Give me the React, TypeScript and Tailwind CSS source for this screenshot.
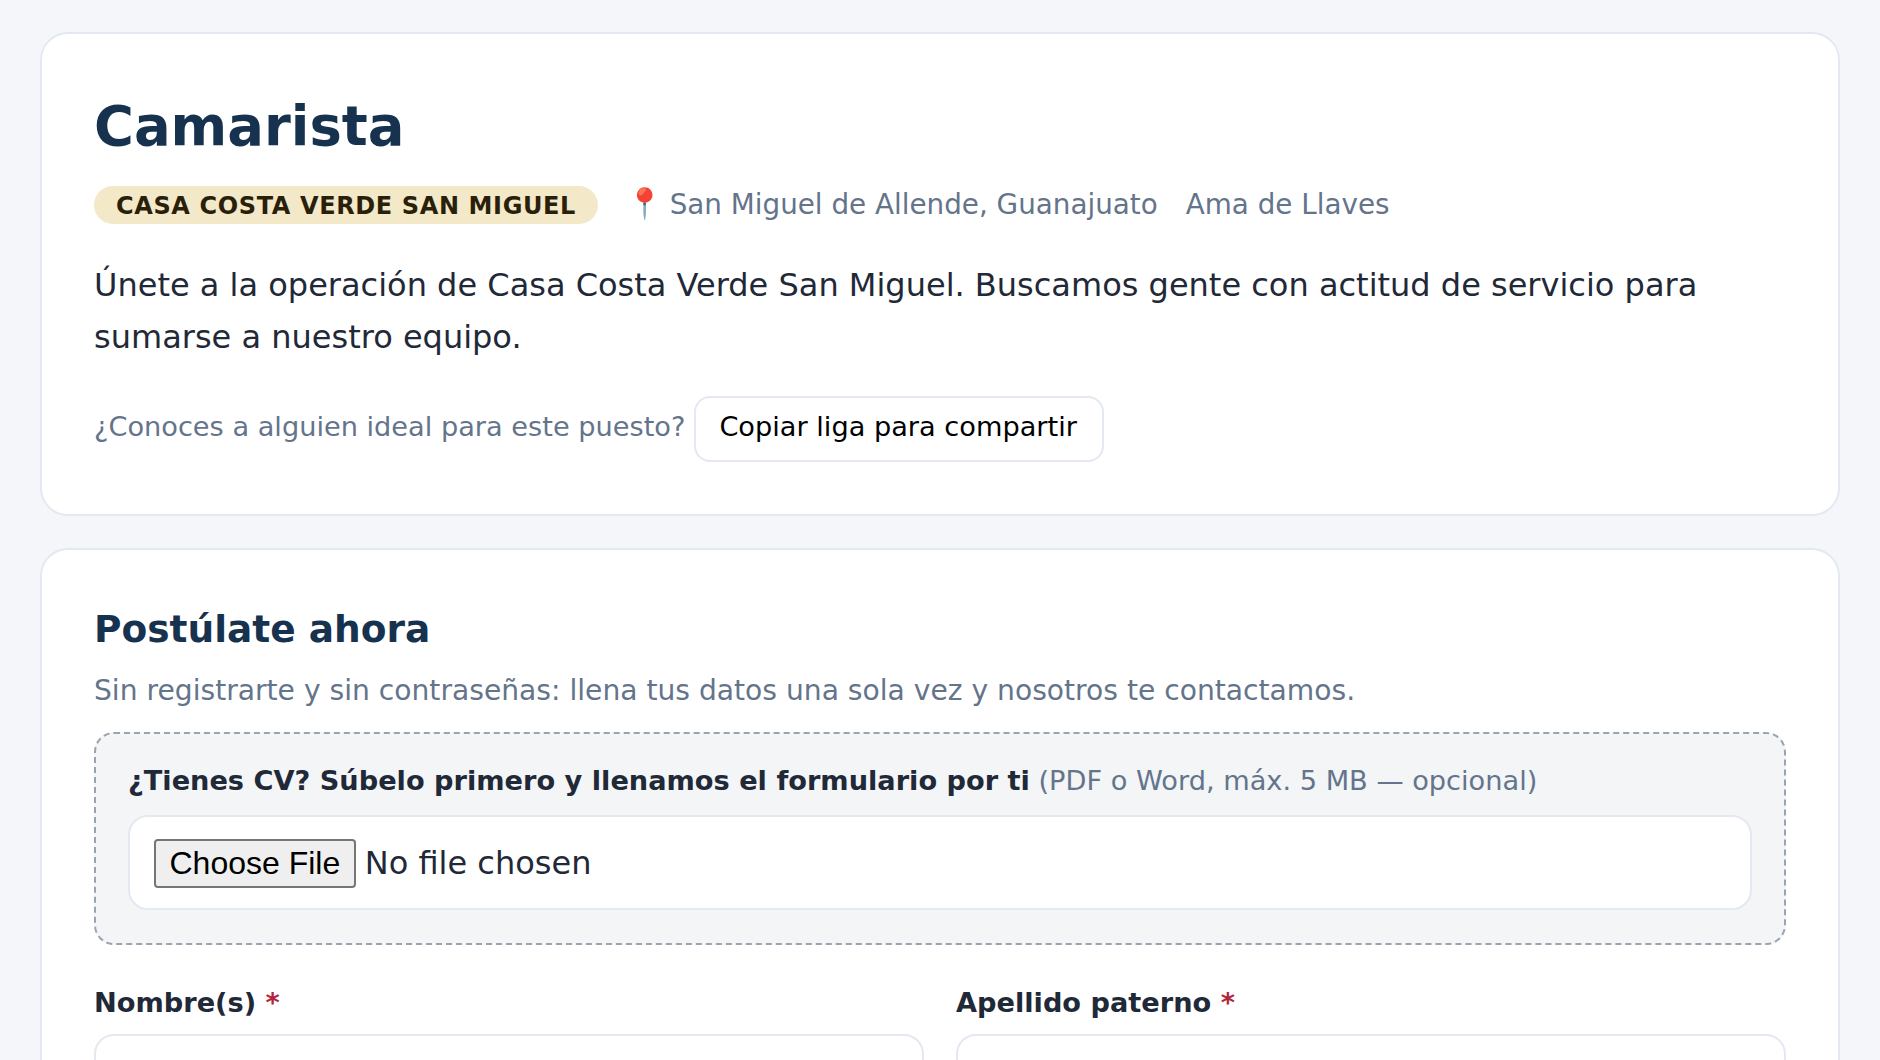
const FONT = "font-['DejaVu_Sans',sans-serif]";

function Field({ label }: { label: string }) {
  return (
    <div className="min-w-0">
      <label className="block text-[27.2px] leading-[34px] font-bold text-[#1f2937]">
        {label} <span className="text-[#b3243c]">*</span>
      </label>
      <input
        type="text"
        className="mt-[14px] block w-full h-[94px] bg-white border-2 border-[#e4e8f0] rounded-[20px]"
      />
    </div>
  );
}

export default function App() {
  return (
    <div className={`h-[1060px] overflow-hidden bg-[#f4f6fa] px-[40px] pt-[32px] ${FONT}`}>
      <section className="bg-white border-2 border-[#e4e8f0] rounded-[28px] px-[52px] pt-[57px] pb-[51.6px]">
        <h1 className="text-[54.4px] leading-[72px] font-bold text-[#17324f]">Camarista</h1>

        <div className="mt-[21px] flex items-center">
          <span className="bg-[#f3e8c8] text-[#2a1f08] rounded-full h-[38px] px-[22px] pt-[3px] flex items-center text-[24px] font-bold tracking-[0.62px] uppercase">
            Casa Costa Verde San Miguel
          </span>
          <span className="ml-[28px] text-[27.8px] text-[#64748b]">
            <span className="text-[30px] leading-none mr-[-2.2px]">📍</span> San Miguel de Allende, Guanajuato
          </span>
          <span className="ml-[28px] text-[27.8px] text-[#64748b]">Ama de Llaves</span>
        </div>

        <p className="mt-[32.9px] text-[32px] leading-[52.8px] text-[#1f2937]">
          Únete a la operación de Casa Costa Verde San Miguel. Buscamos gente con actitud de servicio para sumarse a nuestro equipo.
        </p>

        <div className="mt-[32px] flex items-center">
          <span className="pb-[3px] text-[27.2px] text-[#64748b]">¿Conoces a alguien ideal para este puesto?</span>
          <button className="ml-[9px] h-[66px] pl-[23px] pr-[25px] pb-[3px] bg-white border-2 border-[#e4e8f0] rounded-[16px] text-[27.2px] text-black">
            Copiar liga para compartir
          </button>
        </div>
      </section>

      <section className="mt-[32px] bg-white border-2 border-[#e4e8f0] rounded-[28px] px-[52px] pt-[55.5px]">
        <h2 className="text-[37.5px] leading-[48px] font-bold text-[#17324f]">Postúlate ahora</h2>
        <p className="mt-[17.5px] text-[28.16px] leading-[40px] text-[#64748b]">
          Sin registrarte y sin contraseñas: llena tus datos una sola vez y nosotros te contactamos.
        </p>

        <div className="mt-[21px] bg-[#f3f5f7] border-2 border-dashed border-[#9aa3b2] rounded-[20px] px-[32px] pt-[29.4px] pb-[32.9px]">
          <p className="text-[27.2px] leading-[36px] text-[#64748b]">
            <strong className="font-bold text-[#1f2937]">¿Tienes CV? Súbelo primero y llenamos el formulario por ti</strong> (PDF o Word, máx. 5 MB — opcional)
          </p>
          <input
            type="file"
            className="mt-[15.6px] block w-full h-[95px] bg-white border-2 border-[#e4e8f0] rounded-[20px] px-[24px] py-[22px] text-[32px] leading-[44px] text-[#1f2937] file:font-['Liberation_Sans',sans-serif] file:h-[49px] file:px-[13.5px] file:pb-[17px] file:mr-[9px] file:bg-[#efefef] file:border-2 file:border-solid file:border-[#767676] file:rounded-[4px] file:text-black"
          />
        </div>

        <div className="mt-[41.5px] grid grid-cols-2 gap-[32px]">
          <Field label="Nombre(s)" />
          <Field label="Apellido paterno" />
        </div>
      </section>
    </div>
  );
}
